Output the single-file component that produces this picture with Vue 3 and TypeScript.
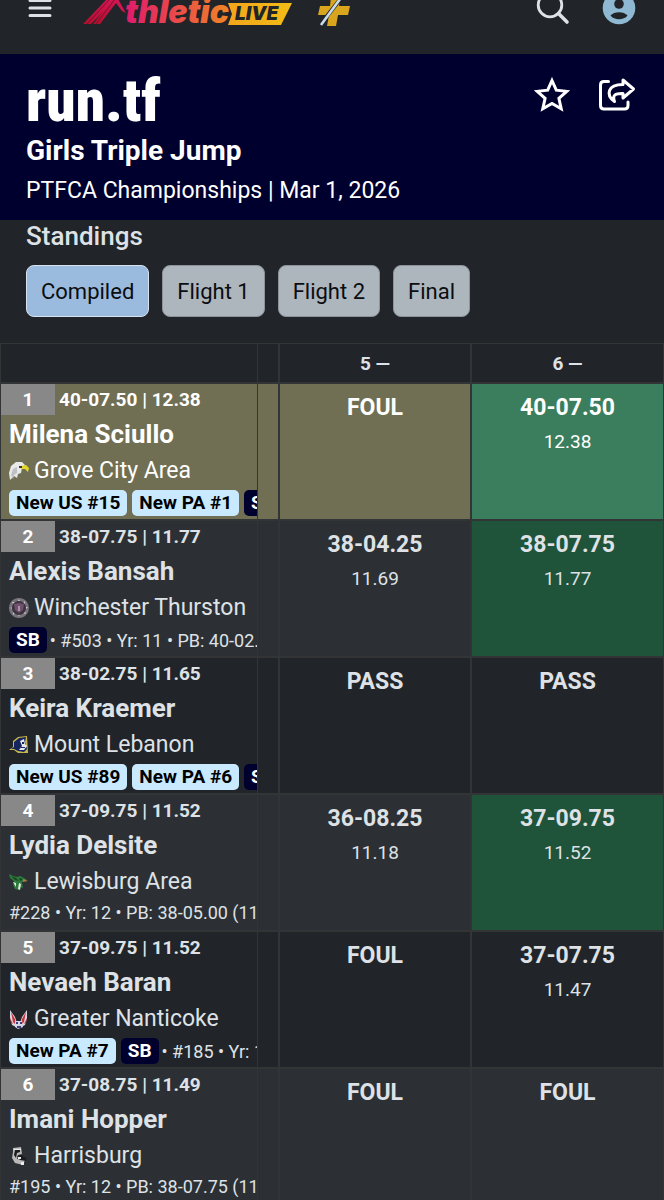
<script setup lang="ts">
import { ref } from 'vue'

interface Shape { d: string; fill: string }
interface Attempt { mark: string; metric?: string; best?: boolean }
interface Athlete {
  rank: number
  result: string
  name: string
  school: string
  crest: Shape[]
  ranks: string[]
  seasonBest: boolean
  meta: string
  attempts: Attempt[]
}

const tabs = ['Compiled', 'Flight 1', 'Flight 2', 'Final']
const active = ref('Compiled')

const eagle: Shape[] = [
  { d: 'M1 19 L0 12 L2 5 L7 1 L13 1 L16 4 L13 7 L12 12 L9 13 L8 17 L5 15 Z', fill: '#e9e9ea' },
  { d: 'M4 8 L8 6 L8 12 L5 14 L4 18 L2 14 Z', fill: '#bfc0c6' },
  { d: 'M11 5 L17 4 L20 7 L19 11 L16 8 L12 8 Z', fill: '#e3d52a' },
  { d: 'M10 5 h3 v2 h-3 Z', fill: '#3a3a35' },
]
const seal: Shape[] = [
  { d: 'M10 0 A10 10 0 1 1 9.9 0 Z', fill: '#77737a' },
  { d: 'M10 1 l1 2 h-2 Z M16 3 l0 3 l-2 -1 Z M19 9 l-2 2 v-2 Z M17 16 l-3 -1 l2 -2 Z M10 19 l-1 -3 h2 Z M4 17 l0 -3 l2 1 Z M1 10 l3 -1 v2 Z M3 4 l3 0 l-2 2 Z', fill: '#c9c5ca' },
  { d: 'M10 3 A7 7 0 1 1 9.9 3 Z', fill: '#3c3340' },
  { d: 'M5 6 L10 5 L15 6 L14 12 L10 15 L6 12 Z', fill: '#71506d' },
  { d: 'M9 8 h2 v5 h-2 Z', fill: '#a996a9' },
]
const devil: Shape[] = [
  { d: 'M0 15 L4 12 L4 6 L9 2 L18 1 L19 18 L9 18 L5 15 Z', fill: '#c9b64c' },
  { d: 'M2 14 L5 12 L5 7 L10 3 L17 2 L16 7 L18 14 L15 17 L9 16 L5 14 Z', fill: '#15265e' },
  { d: 'M11 6 L15 4 L16 9 L18 11 L15 15 L10 15 L13 11 Z', fill: '#e6e8ef' },
  { d: 'M13 7 h2 v2 h-2 Z M12 12 h4 v1 h-4 Z', fill: '#15265e' },
]
const dragon: Shape[] = [
  { d: 'M0 2 L4 4 L8 5 L11 4 L15 6 L18 8 L13 10 L14 16 L11 15 L10 18 L6 17 L4 13 L5 9 L1 6 Z', fill: '#2c7a3c' },
  { d: 'M2 4 L7 6 L10 9 L6 8 Z M10 6 L14 7 L11 9 Z', fill: '#174522' },
  { d: 'M4 10 L7 11 L7 15 Z M10 11 L12 12 L11 18 L9 17 Z', fill: '#dfe9df' },
  { d: 'M14 7 L19 9 L14 10 Z', fill: '#b37b3c' },
]
const wings: Shape[] = [
  { d: 'M1 1 L6 8 L8 14 L7 18 L3 16 L1 9 Z M18 1 L13 8 L11 14 L12 18 L16 16 L18 9 Z', fill: '#d8d6de' },
  { d: 'M2 3 L6 10 L7 16 L4 13 Z M17 3 L13 10 L12 16 L15 13 Z', fill: '#c8333f' },
  { d: 'M1 9 L4 15 L2 14 Z M18 9 L15 15 L17 14 Z', fill: '#c8333f' },
  { d: 'M6 12 L13 12 L14 18 L9 20 L6 18 Z', fill: '#d5d5e4' },
  { d: 'M7 13 h2 v2 h-2 Z M11 13 h2 v2 h-2 Z M8 17 h4 v2 h-4 Z', fill: '#3c3f82' },
]
const cougar: Shape[] = [
  { d: 'M4 2 L12 1 L13 8 L9 9 L8 13 L16 14 L14 19 L6 17 L3 12 L4 6 Z', fill: '#b9b9b9' },
  { d: 'M6 4 L11 3 L11 6 L8 7 L7 12 L5 9 Z M8 10 L12 9 L17 12 L17 15 L11 14 Z', fill: '#1b1c1d' },
  { d: 'M5 3 h7 v1 h-7 Z M12 16 h3 v3 h-3 Z M9 11 h3 v2 h-3 Z', fill: '#ececec' },
]

const athletes: Athlete[] = [
  { rank: 1, result: '40-07.50 | 12.38', name: 'Milena Sciullo', school: 'Grove City Area', crest: eagle,
    ranks: ['New US #15', 'New PA #1'], seasonBest: true, meta: '',
    attempts: [{ mark: 'FOUL' }, { mark: '40-07.50', metric: '12.38', best: true }] },
  { rank: 2, result: '38-07.75 | 11.77', name: 'Alexis Bansah', school: 'Winchester Thurston', crest: seal,
    ranks: [], seasonBest: true, meta: '• #503 • Yr: 11 • PB: 40-02.',
    attempts: [{ mark: '38-04.25', metric: '11.69' }, { mark: '38-07.75', metric: '11.77', best: true }] },
  { rank: 3, result: '38-02.75 | 11.65', name: 'Keira Kraemer', school: 'Mount Lebanon', crest: devil,
    ranks: ['New US #89', 'New PA #6'], seasonBest: true, meta: '',
    attempts: [{ mark: 'PASS' }, { mark: 'PASS' }] },
  { rank: 4, result: '37-09.75 | 11.52', name: 'Lydia Delsite', school: 'Lewisburg Area', crest: dragon,
    ranks: [], seasonBest: false, meta: '#228 • Yr: 12 • PB: 38-05.00 (11.',
    attempts: [{ mark: '36-08.25', metric: '11.18' }, { mark: '37-09.75', metric: '11.52', best: true }] },
  { rank: 5, result: '37-09.75 | 11.52', name: 'Nevaeh Baran', school: 'Greater Nanticoke', crest: wings,
    ranks: ['New PA #7'], seasonBest: true, meta: '• #185 • Yr: 1',
    attempts: [{ mark: 'FOUL' }, { mark: '37-07.75', metric: '11.47' }] },
  { rank: 6, result: '37-08.75 | 11.49', name: 'Imani Hopper', school: 'Harrisburg', crest: cougar,
    ranks: [], seasonBest: false, meta: '#195 • Yr: 12 • PB: 38-07.75 (11.',
    attempts: [{ mark: 'FOUL' }, { mark: 'FOUL' }] },
]
</script>

<template>
  <div class="page">
    <header class="topbar">
      <button class="icon-btn" type="button" aria-label="Menu">
        <svg width="24" height="30" viewBox="0 0 24 30">
          <path d="M2 0.5h20M2 8h20M2 15.5h20" stroke="#dee2e6" stroke-width="3" stroke-linecap="round" />
        </svg>
      </button>
      <a class="brand" href="#" aria-label="AthleticLIVE">
        <svg width="212" height="30" viewBox="0 0 212 30">
          <defs>
            <linearGradient id="warm" gradientUnits="userSpaceOnUse" x1="42" y1="0" x2="150" y2="0">
              <stop offset="0" stop-color="#e01a6d" />
              <stop offset="0.45" stop-color="#e8484c" />
              <stop offset="1" stop-color="#f08a22" />
            </linearGradient>
            <linearGradient id="peak" x1="0" y1="1" x2="1" y2="0">
              <stop offset="0" stop-color="#b00f2c" />
              <stop offset="1" stop-color="#d9165a" />
            </linearGradient>
            <linearGradient id="gold" x1="0" y1="0" x2="1" y2="0">
              <stop offset="0" stop-color="#f3a51c" />
              <stop offset="1" stop-color="#f2bd16" />
            </linearGradient>
          </defs>
          <path d="M0 24 L24 -1 H33 L8 24 Z" fill="url(#peak)" />
          <path d="M10 24 L30 -1 H35 L43 13 L39 11 L33 3 L17 24 Z" fill="url(#peak)" />
          <path d="M4 24 L27 -1 M13 24 L32 -1" stroke="#6d1226" stroke-width="0.8" fill="none" />
          <path d="M145 3 H209 L198 25 H145 L149 14 Z" fill="url(#gold)" />
          <text class="brand-main" x="42" y="23" fill="url(#warm)">thletic</text>
          <text class="brand-live" x="152" y="20" fill="#212529">LIVE</text>
        </svg>
      </a>
      <a class="plus" href="#" aria-label="Plus">
        <svg width="36" height="30" viewBox="0 0 36 30">
          <path d="M14 -3 H23 L22 6 H33 L31 15 H21 L19 26 H10 L12 15 H1 L3 6 H13 Z" fill="#d9a51c" />
          <path d="M25 -3 L3 25" stroke="#212529" stroke-width="4" />
          <path d="M26 -5 L4 25" stroke="#c8dcea" stroke-width="2.6" />
        </svg>
      </a>
      <span class="spacer"></span>
      <button class="icon-btn search" type="button" aria-label="Search">
        <svg width="34" height="30" viewBox="0 0 34 30">
          <circle cx="14" cy="5" r="11.8" fill="none" stroke="#dee2e6" stroke-width="2.8" />
          <path d="M22.5 13.5 L31 22" stroke="#dee2e6" stroke-width="3.6" stroke-linecap="round" />
        </svg>
      </button>
      <button class="icon-btn" type="button" aria-label="Account">
        <svg width="34" height="30" viewBox="0 0 34 30">
          <circle cx="17" cy="8" r="16.3" fill="#8fb9d2" />
          <circle cx="17" cy="4" r="4.8" fill="#212529" />
          <path d="M8.5 15.5 C12 11 22 11 25.5 15.5 C22 20.5 12 20.5 8.5 15.5 Z" fill="#212529" />
        </svg>
      </button>
    </header>

    <section class="event">
      <div class="event-top">
        <a class="runtf" href="#">run.tf</a>
        <div class="actions">
          <button class="icon-btn" type="button" aria-label="Favorite">
            <svg width="36" height="36" viewBox="0 0 36 36">
              <path d="M18 3.5 L22.3 13.2 L32.8 14.3 L24.9 21.3 L27.2 31.8 L18 26.4 L8.8 31.8 L11.1 21.3 L3.2 14.3 L13.7 13.2 Z" fill="none" stroke="#fff" stroke-width="3" />
            </svg>
          </button>
          <button class="icon-btn" type="button" aria-label="Share">
            <svg width="38" height="36" viewBox="0 0 38 36" fill="none" stroke="#fff" stroke-width="3" stroke-linejoin="round" stroke-linecap="round">
              <path d="M10.5 4.5 H6 Q2.5 4.5 2.5 8 V28.5 Q2.5 32 6 32 H26.5 Q30 32 30 28.5 V25" />
              <path d="M25 3 L35.5 12 L25 21 V16.5 C17.5 16.2 14 18 16.5 24.5 C7.5 18 9.5 7.5 25 7.5 Z" />
            </svg>
          </button>
        </div>
      </div>
      <h1>Girls Triple Jump</h1>
      <p>PTFCA Championships | Mar 1, 2026</p>
    </section>

    <main>
      <h2>Standings</h2>
      <nav class="tabs" aria-label="Rounds">
        <button
          v-for="tab in tabs"
          :key="tab"
          type="button"
          class="tab"
          :class="{ active: tab === active }"
          :aria-pressed="tab === active"
          @click="active = tab"
        >{{ tab }}</button>
      </nav>

      <table class="standings">
        <colgroup>
          <col class="c-athlete" />
          <col class="c-prev" />
          <col />
          <col />
        </colgroup>
        <thead>
          <tr><th></th><th></th><th scope="col">5 —</th><th scope="col">6 —</th></tr>
        </thead>
        <tbody>
          <tr v-for="a in athletes" :key="a.rank" :class="{ leader: a.rank === 1 }">
            <td class="athlete">
              <div class="line-rank"><span class="rank">{{ a.rank }}</span><span class="result">{{ a.result }}</span></div>
              <div class="name">{{ a.name }}</div>
              <div class="school">
                <svg width="20" height="20" viewBox="0 0 20 20" aria-hidden="true">
                  <path v-for="(s, i) in a.crest" :key="i" :d="s.d" :fill="s.fill" />
                </svg>
                <span>{{ a.school }}</span>
              </div>
              <div class="tags" :class="{ bare: !a.seasonBest && !a.ranks.length }">
                <span v-for="r in a.ranks" :key="r" class="badge">{{ r }}</span>
                <span v-if="a.seasonBest" class="badge sb">SB</span>
                <span v-if="a.meta" class="meta">{{ a.meta }}</span>
              </div>
            </td>
            <td></td>
            <td v-for="(t, i) in a.attempts" :key="i" class="attempt" :class="{ best: t.best }">
              <div class="mark">{{ t.mark }}</div>
              <div v-if="t.metric" class="metric">{{ t.metric }}</div>
            </td>
          </tr>
        </tbody>
      </table>
    </main>
  </div>
</template>

<style>
body {
  margin: 0;
  background: #212529;
}
</style>

<style scoped>
.page {
  background: #212529;
  color: #dee2e6;
  font-family: Roboto, "Liberation Sans", sans-serif;
}
svg {
  display: block;
  flex: none;
}
.topbar {
  display: flex;
  align-items: flex-start;
  height: 54px;
  padding: 0 28px;
}
.icon-btn {
  padding: 0;
  border: 0;
  background: none;
  cursor: pointer;
}
.brand {
  margin-left: 31px;
}
.brand-main {
  font: italic 900 32px Inter, sans-serif;
}
.brand-live {
  font: italic 900 19px Inter, sans-serif;
}
.plus {
  margin-left: 22px;
}
.spacer {
  flex: 1;
}
.search {
  margin-right: 32px;
}
.event {
  background: #00002f;
  color: #fff;
  height: 166px;
  padding: 0 28px 0 26px;
  box-sizing: border-box;
}
.event-top {
  display: flex;
  justify-content: space-between;
  height: 78px;
}
.runtf {
  color: #fff;
  text-decoration: none;
  font: 900 59px/94px "Roboto Condensed", "Liberation Sans Narrow", "Liberation Sans", sans-serif;
}
.actions {
  display: flex;
  align-items: flex-start;
  gap: 28px;
  padding-top: 23px;
}
h1 {
  margin: 0;
  font-size: 28px;
  line-height: 38px;
  font-weight: 700;
}
.event p {
  margin: 0;
  font-size: 23px;
  line-height: 42px;
}
h2 {
  margin: 0;
  padding: 0 26px;
  font-size: 26px;
  line-height: 32px;
  font-weight: 500;
}
.tabs {
  display: flex;
  gap: 13px;
  padding: 13px 26px 26px;
}
.tab {
  height: 52px;
  padding: 0 14px;
  border: 1px solid #8b9299;
  border-radius: 8px;
  background: #adb5bd;
  color: #0b0d10;
  font: 22px Roboto, sans-serif;
  cursor: pointer;
}
.tab.active {
  background: #9abade;
  border-color: #d6e2f2;
}
.standings {
  width: 100%;
  table-layout: fixed;
  border-collapse: separate;
  border-spacing: 0;
}
.c-athlete {
  width: 258px;
}
.c-prev {
  width: 22px;
}
th,
td {
  padding: 0;
  box-sizing: border-box;
  border: 0 solid #333435;
  border-width: 0 2px 2px 0;
  vertical-align: top;
}
th {
  height: 41px;
  border-top-width: 1px;
  font-size: 19px;
  font-weight: 700;
  vertical-align: middle;
}
th:first-child,
td:first-child {
  border-right-width: 1px;
  border-left-width: 1px;
}
th:last-child,
td:last-child {
  border-right-width: 1px;
}
td {
  height: 137px;
}
tbody tr:nth-child(even) {
  background: #2c3034;
}
tbody tr.leader {
  background: #706f54;
  color: #fff;
}
.athlete {
  overflow: hidden;
  white-space: nowrap;
}
.line-rank {
  display: flex;
  height: 32px;
  font-size: 19px;
  line-height: 31px;
  font-weight: 700;
}
.rank {
  width: 54px;
  height: 31px;
  background: #888;
  color: #fff;
  text-align: center;
}
.result {
  margin-left: 4px;
}
.name {
  padding-left: 8px;
  font-size: 26px;
  line-height: 36px;
  font-weight: 700;
}
.school {
  display: flex;
  align-items: center;
  gap: 5px;
  padding-left: 8px;
  font-size: 23px;
  line-height: 38px;
}
.tags {
  display: flex;
  align-items: center;
  height: 26px;
  padding-left: 8px;
  overflow: hidden;
}
.tags.bare {
  height: 22px;
}
.badge {
  flex: none;
  margin-right: 5px;
  padding: 0 7px;
  border-radius: 5px;
  background: #c9e9ff;
  color: #000;
  font-size: 19px;
  line-height: 26px;
  font-weight: 700;
}
.badge.sb {
  margin-right: 3px;
  background: #00002f;
  color: #fff;
}
.meta {
  font-size: 18px;
}
.attempt {
  text-align: center;
}
.attempt.best {
  background: #1f533a;
  color: #dee2e6;
}
.leader .attempt.best {
  background: #3a7e5e;
  color: #fff;
}
.mark {
  padding-top: 6px;
  font-size: 23px;
  line-height: 36px;
  font-weight: 700;
}
.metric {
  font-size: 19px;
  line-height: 32px;
}
</style>
